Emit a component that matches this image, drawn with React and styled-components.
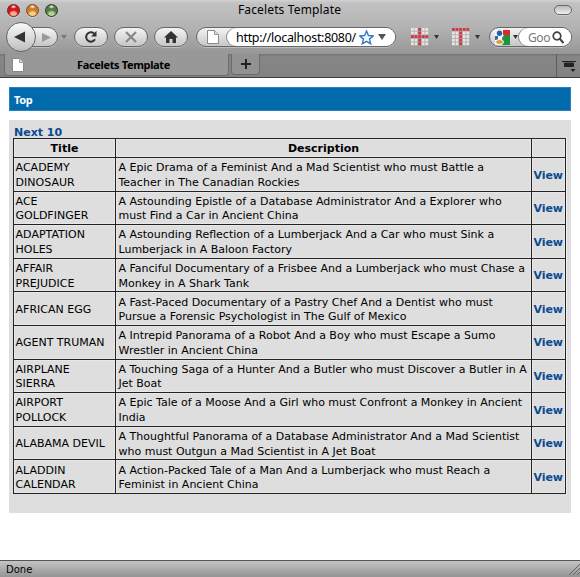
import React from "react";
import styled, { createGlobalStyle } from "styled-components";

const Global = createGlobalStyle`
  * { box-sizing: border-box; }
  body { margin: 0; background: #fff; }
`;

const Window = styled.div`
  width: 580px;
  height: 577px;
  display: flex;
  flex-direction: column;
  overflow: hidden;
  background: #fff;
  color: #000;
  font-family: "DejaVu Sans", Verdana, sans-serif;
  font-size: 11px;
`;

const Chrome = styled.header`
  height: 54px;
  flex: none;
  background: linear-gradient(#d2d2d2 0, #c2c2c2 3px, #b2b2b2 28px, #969696 54px);
`;

const TitleBar = styled.div`
  height: 20px;
  display: grid;
  grid-template-columns: 100px 1fr 100px;
  align-items: center;
  padding: 0 8px 0 7px;
`;

const Lights = styled.div`
  display: flex;
  gap: 6px;
`;

const Light = styled.span`
  width: 13px;
  height: 13px;
  border-radius: 50%;
  border: 1px solid ${(p) => p.$edge};
  background: radial-gradient(ellipse 3px 2px at 50% 16%, #fff 0, transparent 100%),
    radial-gradient(ellipse 5px 4.5px at 50% 86%, ${(p) => p.$glow} 0 50%, ${(p) => p.$tone} 100%);
  box-shadow: 0 1px 0 #d0d0d0;
`;

const WindowTitle = styled.div`
  text-align: center;
  white-space: nowrap;
  font-family: "Noto Sans", sans-serif;
  font-size: 12px;
  line-height: 20px;
  letter-spacing: 0.15px;
`;

const Oval = styled.span`
  justify-self: end;
  width: 18px;
  height: 10px;
  border: 1px solid #666;
  border-radius: 5px;
  background: linear-gradient(#bbb, #eee);
  box-shadow: 0 1px 0 #ccc;
`;

const Toolbar = styled.nav`
  height: 34px;
  display: flex;
  align-items: center;
  padding-left: 6px;
`;

const pill = `
  display: flex;
  flex: none;
  align-items: center;
  border: 1px solid #666;
  height: 20px;
  border-radius: 10px;
  background: linear-gradient(#f4f4f4, #c6c6c6);
  box-shadow: 0 1px 0 #bdbdbd;
`;

const BackButton = styled.button`
  width: 30px;
  height: 30px;
  flex: none;
  padding: 0 2px 0 0;
  z-index: 1;
  border: 1px solid #666;
  border-radius: 50%;
  display: grid;
  place-items: center;
  background: linear-gradient(#fafafa, #bebebe);
`;

const ForwardButton = styled.button`
  ${pill}
  width: 28px;
  margin-left: -6px;
  padding: 0 0 0 11px;
  border-radius: 0 10px 10px 0;
`;

const PillButton = styled.button`
  ${pill}
  width: 34px;
  justify-content: center;
  padding: 0;
  margin-right: 6px;
`;

const Caret = styled.svg`
  flex: none;
  width: ${(p) => p.$w || 5}px;
  height: ${(p) => p.$h || 4}px;
  margin: ${(p) => p.$m || "0"};
  fill: ${(p) => p.$color || "#333"};
`;

const AddressBar = styled.div`
  ${pill}
  width: 200px;
  margin: 0 15px 0 2px;
`;

const SiteIdentity = styled.span`
  width: 30px;
  padding-left: 10px;
  display: flex;
`;

const Field = styled.div`
  flex: 1;
  height: 18px;
  display: flex;
  align-items: center;
  border-radius: 9px;
  background: #fff;
  box-shadow: -1px 0 0 #888;
  overflow: hidden;
  padding-left: ${(p) => p.$pad}px;
`;

const Url = styled.span`
  width: 123px;
  flex: none;
  white-space: nowrap;
  font-family: "Noto Sans", sans-serif;
  font-size: 12.5px;
  letter-spacing: -0.3px;
`;

const SearchBar = styled.div`
  ${pill}
  width: 83px;
`;

const Engine = styled.span`
  width: 29px;
  display: flex;
  align-items: center;
  padding-left: 5px;
`;

const SearchHint = styled.span`
  width: 24px;
  flex: none;
  white-space: nowrap;
  color: #777;
  font-family: "Noto Sans", sans-serif;
  font-size: 12px;
  letter-spacing: -0.4px;
`;

const TabBar = styled.div`
  height: 24px;
  flex: none;
  display: flex;
  background: linear-gradient(#747474, #868686 3px, #828282);
  border-bottom: 1px solid #3e3e3e;
  padding-left: 4px;
`;

const Tab = styled.div`
  width: 225px;
  height: 22px;
  display: flex;
  align-items: center;
  padding-left: 7px;
  background: #989898;
  border: solid #6c6c6c;
  border-width: 0 1px 1px;
  border-radius: 0 0 4px 4px;
`;

const TabTitle = styled.span`
  flex: 1;
  padding-right: 5px;
  text-align: center;
  white-space: nowrap;
  font-family: "Noto Sans", sans-serif;
  font-size: 11px;
  font-weight: bold;
  letter-spacing: -0.35px;
`;

const NewTab = styled.button`
  width: 29px;
  height: 21px;
  margin-left: 2px;
  padding: 0;
  display: grid;
  place-items: center;
  background: #929292;
  border: solid #6c6c6c;
  border-width: 0 1px 1px;
  border-radius: 0 0 4px 4px;
`;

const TabList = styled.div`
  margin-left: auto;
  width: 24px;
  border-left: 1px solid #5c5c5c;
  padding: 6px 0 0 5px;
`;

const Page = styled.main`
  flex: 1;
  padding: 9px 9px 0;
`;

const Banner = styled.div`
  height: 24px;
  border: 1px solid #2a82bc;
  background: #006aad;
  color: #fff;
  font: bold 11px/22px "Noto Sans", sans-serif;
  letter-spacing: -0.3px;
  padding: 1px 0 0 4px;
`;

const Content = styled.section`
  height: 393px;
  margin-top: 9px;
  padding: 5px 4px 0;
  background: #dedede;
`;

const Link = styled.a`
  color: #0a4a91;
  font-weight: bold;
  letter-spacing: ${(p) => p.$track || "0"};
`;

const Pager = styled.div`
  height: 13px;
  line-height: 15px;
  padding-left: 1px;
`;

const Films = styled.div`
  width: 553px;
  border: 1px solid #222;
  border-bottom: 0;
  line-height: 14.6px;
  box-shadow: 1px 0 0 #f0f0f0;
`;

const Row = styled.div`
  display: grid;
  grid-template-columns: 102px 416px 33px;
  height: ${(p) => (p.$head ? 19 : 33.6)}px;
  border-bottom: 1px solid #222;
  font-weight: ${(p) => (p.$head ? "bold" : "normal")};
  text-align: ${(p) => (p.$head ? "center" : "left")};
`;

const Cell = styled.div`
  display: flex;
  flex-direction: column;
  justify-content: center;
  padding: 3px 0 0 ${(p) => (p.$head ? 0 : p.$wide ? 2.5 : 1.6)}px;
  white-space: nowrap;
  border-right: ${(p) => (p.$last ? "0" : "1px solid #222")};
  box-shadow: inset 0 0 0 1px #e8e8e8;
`;

const Line = styled.span`
  display: block;
`;

const StatusBar = styled.footer`
  height: 17px;
  flex: none;
  display: flex;
  justify-content: space-between;
  align-items: center;
  padding-left: 6px;
  border-top: 1px solid #555;
  background: linear-gradient(#c4c4c4, #949494);
  font-size: 10px;
`;

const films = [
  [["ACADEMY", "DINOSAUR"], ["A Epic Drama of a Feminist And a Mad Scientist who must Battle a", "Teacher in The Canadian Rockies"]],
  [["ACE", "GOLDFINGER"], ["A Astounding Epistle of a Database Administrator And a Explorer who", "must Find a Car in Ancient China"]],
  [["ADAPTATION", "HOLES"], ["A Astounding Reflection of a Lumberjack And a Car who must Sink a", "Lumberjack in A Baloon Factory"]],
  [["AFFAIR", "PREJUDICE"], ["A Fanciful Documentary of a Frisbee And a Lumberjack who must Chase a", "Monkey in A Shark Tank"]],
  [["AFRICAN EGG"], ["A Fast-Paced Documentary of a Pastry Chef And a Dentist who must", "Pursue a Forensic Psychologist in The Gulf of Mexico"]],
  [["AGENT TRUMAN"], ["A Intrepid Panorama of a Robot And a Boy who must Escape a Sumo", "Wrestler in Ancient China"]],
  [["AIRPLANE", "SIERRA"], ["A Touching Saga of a Hunter And a Butler who must Discover a Butler in A", "Jet Boat"]],
  [["AIRPORT", "POLLOCK"], ["A Epic Tale of a Moose And a Girl who must Confront a Monkey in Ancient", "India"]],
  [["ALABAMA DEVIL"], ["A Thoughtful Panorama of a Database Administrator And a Mad Scientist", "who must Outgun a Mad Scientist in A Jet Boat"]],
  [["ALADDIN", "CALENDAR"], ["A Action-Packed Tale of a Man And a Lumberjack who must Reach a", "Feminist in Ancient China"]],
];

const PageIcon = () => (
  <svg width="12" height="14" viewBox="0 0 12 14">
    <path d="M.5.5h7l4 4v9H.5z" fill="#fff" stroke="#888" />
    <path d="M7.5.5v4h4" fill="#ddd" stroke="#999" />
  </svg>
);

const DownCaret = (props) => (
  <Caret viewBox="0 0 10 8" preserveAspectRatio="none" {...props}>
    <path d="M0 0h10L5 8z" />
  </Caret>
);

const GridIcon = ({ isMarked }) => (
  <svg width="18" height="18" viewBox="0 0 18 18">
    {Array.from({ length: 25 }, (_, i) => {
      const c = i % 5;
      const r = Math.floor(i / 5);
      return (
        <rect key={i} x={c * 3.6} y={r * 3.6} width="2.8" height="2.8" fill={isMarked(c, r) ? "#d63347" : "#e6e6e6"} />
      );
    })}
  </svg>
);

export default function App() {
  return (
    <Window>
      <Global />
      <Chrome>
        <TitleBar>
          <Lights>
            <Light $edge="#6e2020" $tone="#d8131c" $glow="#f8b090" />
            <Light $edge="#754a28" $tone="#cf7c27" $glow="#f8cf85" />
            <Light $edge="#26381f" $tone="#557a48" $glow="#b4d492" />
          </Lights>
          <WindowTitle>Facelets Template</WindowTitle>
          <Oval />
        </TitleBar>
        <Toolbar>
          <BackButton>
            <svg width="12" height="12"><path d="M11 .5v11L0 6z" fill="#333" /></svg>
          </BackButton>
          <ForwardButton>
            <svg width="9" height="9"><path d="M0 0v9l9-4.500z" fill="#999" /></svg>
          </ForwardButton>
          <DownCaret $w={6} $m="0 7px 0 3px" $color="#777" />
          <PillButton>
            <svg width="14" height="14" viewBox="0 0 14 14">
              <path d="M11 9.300A4.700 4.700 0 1 1 10 3.500" fill="none" stroke="#333" strokeWidth="2" />
              <path d="M12.500.8v5.700H7z" fill="#333" />
            </svg>
          </PillButton>
          <PillButton>
            <svg width="12" height="12" viewBox="0 0 12 12">
              <path d="M1 1l10 10M11 1L1 11" stroke="#888" strokeWidth="2.200" />
            </svg>
          </PillButton>
          <PillButton>
            <svg width="14" height="13" viewBox="0 0 14 13">
              <path d="M7 0l7 6.500h-2V12H8.500V8h-3v4H2V6.500H0z" fill="#333" />
            </svg>
          </PillButton>
          <AddressBar>
            <SiteIdentity><PageIcon /></SiteIdentity>
            <Field $pad={9}>
              <Url>http://localhost:8080/</Url>
              <svg width="15" height="15" viewBox="0 0 15 15">
                <path d="M7.500 1l1.900 4.500 4.800.4-3.700 3.200 1.200 4.700-4.200-2.500-4.200 2.500 1.200-4.700L.8 5.900l4.800-.4z" fill="#f4f9ff" stroke="#3478c8" strokeWidth="1.400" />
              </svg>
              <DownCaret $w={8} $h={6} $m="0 0 0 4px" $color="#555" />
            </Field>
          </AddressBar>
          <GridIcon isMarked={(c, r) => c === 2 || r === 2} />
          <DownCaret $m="0 13px 0 5px" />
          <GridIcon isMarked={(c, r) => c === 2 || r === 0} />
          <DownCaret $m="0 9px 0 5px" />
          <SearchBar>
            <Engine>
              <svg width="15" height="15" viewBox="0 0 15 15">
                <path d="M0 0h15v15H0z" fill="#f7f7f7" />
                <path d="M8 0h7v5H8z" fill="#e32626" />
                <path d="M9 5h6v10H7V8z" fill="#1c9440" />
                <circle cx="4.500" cy="3.200" r="2.700" fill="#1e5fb4" />
                <path d="M0 6h3v4H0z" fill="#2b68b8" />
                <ellipse cx="4.500" cy="12" rx="4" ry="2.500" fill="#e09a3c" stroke="#fff" />
              </svg>
              <DownCaret $m="0 0 0 3px" />
            </Engine>
            <Field $pad={9}>
              <SearchHint>Goo</SearchHint>
              <svg width="12" height="13" viewBox="0 0 12 13">
                <circle cx="5" cy="5" r="3.800" fill="none" stroke="#444" strokeWidth="1.700" />
                <path d="M7.500 7.500l4 4.500" stroke="#444" strokeWidth="2" />
              </svg>
            </Field>
          </SearchBar>
        </Toolbar>
      </Chrome>
      <TabBar>
        <Tab>
          <PageIcon />
          <TabTitle>Facelets Template</TabTitle>
        </Tab>
        <NewTab>
          <svg width="10" height="10"><path d="M5 0v10M0 5h10" stroke="#222" strokeWidth="2" /></svg>
        </NewTab>
        <TabList>
          <svg width="14" height="12" viewBox="0 0 14 12">
            <path d="M0 1.500h14M2.500 3h9v3.500h-9z" fill="#222" stroke="#222" />
            <path d="M8.500 9h5L11 12z" fill="#222" />
          </svg>
        </TabList>
      </TabBar>
      <Page>
        <Banner>Top</Banner>
        <Content>
          <Pager><Link>Next 10</Link></Pager>
          <Films>
            <Row $head>
              <Cell $head>Title</Cell>
              <Cell $head>Description</Cell>
              <Cell $head $last />
            </Row>
            {films.map(([title, description]) => (
              <Row key={title[0]}>
                <Cell>{title.map((t) => <Line key={t}>{t}</Line>)}</Cell>
                <Cell $wide>{description.map((t) => <Line key={t}>{t}</Line>)}</Cell>
                <Cell $last><Link $track="-0.15px">View</Link></Cell>
              </Row>
            ))}
          </Films>
        </Content>
      </Page>
      <StatusBar>
        Done
        <svg width="12" height="14" viewBox="0 0 12 14">
          <path d="M1 13L12 2M5 13l7-7M9 13l3-3" stroke="#666" />
        </svg>
      </StatusBar>
    </Window>
  );
}
